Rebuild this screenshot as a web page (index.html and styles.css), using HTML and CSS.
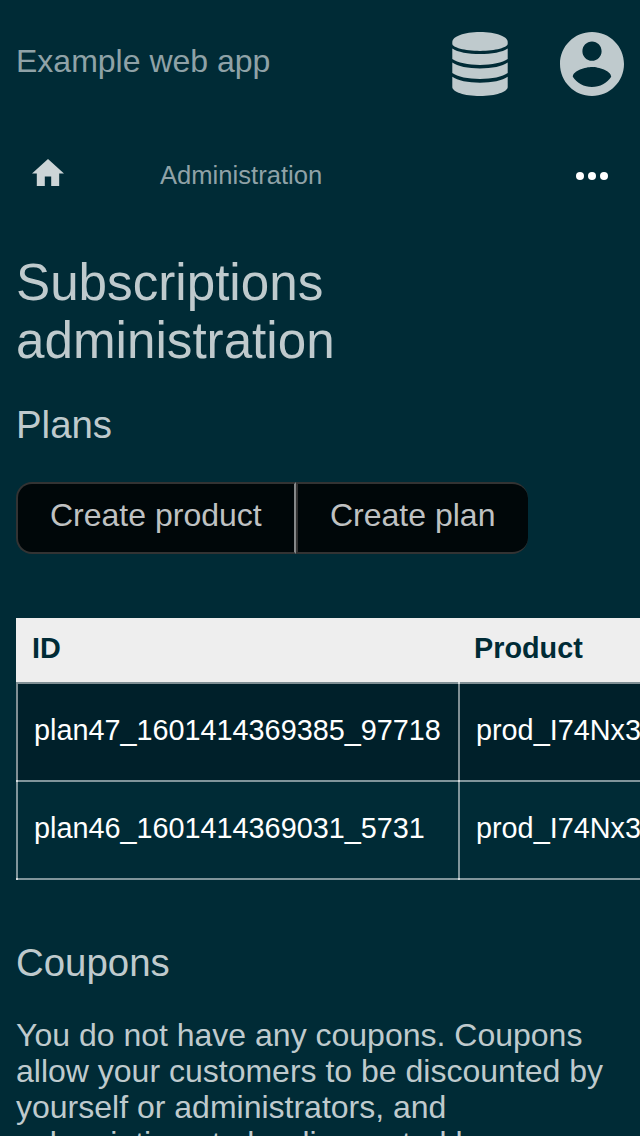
FILE: index.html
```html
<!DOCTYPE html>
<html lang="en">
<head>
<meta charset="utf-8">
<title>Subscriptions administration</title>
<link rel="stylesheet" href="styles.css">
</head>
<body>
<header class="topbar">
  <span class="brand">Example web app</span>
  <svg class="icon-db" viewBox="0 0 56 64" aria-hidden="true">
    <path d="M.3 10C.3 4.500 12 0 28 0s27.700 4.500 27.700 10v2c0 3.200-12 6.900-27.700 6.900S.3 15.200.3 12z"/>
    <path d="M.3 16.500c5 3.700 16 5.500 27.700 5.500s22.700-1.800 27.700-5.500v10.600c-5 3.800-16 5.800-27.700 5.800S5.300 30.900.3 27.100z"/>
    <path d="M.3 30.600c5 3.900 16 5.900 27.700 5.900s22.700-2 27.700-5.900v10.500c-5 3.900-16 5.900-27.700 5.900S5.300 45 .3 41.100z"/>
    <path d="M.3 44.800c5 3.900 16 5.900 27.700 5.900s22.700-2 27.700-5.900V55c0 4.800-12 9-27.700 9S.3 59.800.3 55z"/>
  </svg>
  <svg class="icon-user" viewBox="2 2 20 20" aria-hidden="true"><path d="M12 2C6.480 2 2 6.480 2 12s4.480 10 10 10 10-4.480 10-10S17.520 2 12 2zm0 3c1.660 0 3 1.340 3 3s-1.340 3-3 3-3-1.340-3-3 1.340-3 3-3zm0 14.200c-2.500 0-4.710-1.280-6-3.220.03-1.990 4-3.080 6-3.080 1.990 0 5.970 1.090 6 3.080-1.290 1.940-3.500 3.220-6 3.220z"/></svg>
</header>
<nav class="navbar">
  <svg class="icon-home" viewBox="2 3 20 17" aria-hidden="true"><path d="M10 20v-6h4v6h5v-8h3L12 3 2 12h3v8z"/></svg>
  <span class="nav-title">Administration</span>
  <svg class="icon-more" viewBox="0 0 32 8" aria-hidden="true"><circle cx="4" cy="4" r="4"/><circle cx="16" cy="4" r="4"/><circle cx="28" cy="4" r="4"/></svg>
</nav>
<main class="content">
  <h1 class="title">Subscriptions administration</h1>
  <h2 class="section-title">Plans</h2>
  <div class="button-group">
    <a class="button button-first">Create product</a>
    <a class="button button-last">Create plan</a>
  </div>
  <div class="grid">
    <div class="head">ID</div><div class="head">Product</div>
    <div class="cell cell-dark">plan47_1601414369385_97718</div><div class="cell cell-dark cell-joint">prod_I74Nx3</div>
    <div class="cell">plan46_1601414369031_5731</div><div class="cell">prod_I74Nx3</div>
  </div>
  <h2 class="section-title">Coupons</h2>
  <p class="text">You do not have any coupons. Coupons allow your customers to be discounted by yourself or administrators, and subscriptions to be discounted by</p>
</main>
</body>
</html>
```
FILE: styles.css
```css
* {
  box-sizing: border-box;
}
body {
  margin: 0;
  height: 1136px;
  overflow: hidden;
  background: #002b36;
  color: #bfcacd;
  font: 32px/36px "Liberation Sans", Arial, sans-serif;
}
svg {
  display: block;
  fill: currentColor;
}
.topbar {
  display: flex;
  align-items: center;
  height: 128px;
  padding: 0 16px;
}
.brand {
  margin-right: auto;
  padding-bottom: 6px;
  color: #8fa2a7;
}
.icon-db {
  width: 56px;
  height: 64px;
  margin-right: 52px;
}
.icon-user {
  width: 64px;
  height: 64px;
}
.navbar {
  display: flex;
  align-items: center;
  height: 96px;
  padding: 0 32px;
}
.icon-home {
  width: 32px;
  height: 27.2px;
  margin-bottom: 7px;
  color: #ccd5d7;
}
.nav-title {
  margin: 0 auto 2px 96px;
  font-size: 25.6px;
  color: #8fa2a7;
}
.icon-more {
  width: 32px;
  height: 8px;
  color: #fff;
}
.content {
  padding: 30px 16px 0;
}
.title {
  margin: 0 0 33px;
  font-size: 51.2px;
  line-height: 58px;
  font-weight: 400;
}
.section-title {
  margin: 0;
  font-size: 38.4px;
  line-height: 44px;
  font-weight: 400;
}
.button-group {
  display: flex;
  width: 512px;
  height: 72px;
  margin: 35px 0 64px;
}
.button {
  border: 2px solid #333;
  background: #000709;
  color: #bfc1c2;
  padding: 13px 32px 0;
  line-height: 36px;
  white-space: nowrap;
}
.button-first {
  width: 280px;
  border-right-color: #858889;
  border-radius: 16px 0 0 16px;
}
.button-last {
  flex: 1;
  border-right: 0;
  border-radius: 0 16px 16px 0;
}
.grid {
  display: grid;
  grid-template-columns: 442px 182px;
  grid-template-rows: 64px 100px 98px;
  margin-right: -16px;
  margin-bottom: 61px;
  font-size: 28.8px;
  white-space: nowrap;
}
.head {
  padding: 12px 16px;
  background: #eee;
  color: #002b36;
  font-weight: 700;
}
.cell {
  position: relative;
  padding: 28px 0 0 16px;
  border-left: 2px solid #80959b;
  border-bottom: 2px solid #80959b;
  color: #fff;
}
.cell-dark {
  border-top: 2px solid #808f94;
  border-left-color: #808f94;
  background: #00202a;
}
/* Brighter squares where the grid lines cross */
.cell::after,
.cell-joint::before {
  content: "";
  position: absolute;
  left: -2px;
  width: 2px;
  height: 2px;
  background: #d5dcde;
}
.cell::after {
  bottom: -2px;
}
.cell-joint::before {
  top: -2px;
}
.text {
  margin: 32px 0 0;
}
```
